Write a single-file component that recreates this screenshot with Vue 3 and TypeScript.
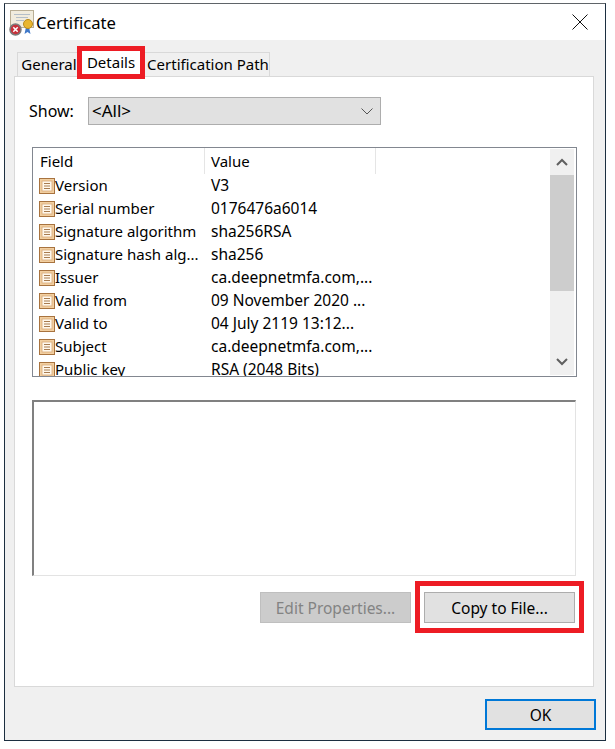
<script setup lang="ts">
interface Row { field: string; value: string }
const rows: Row[] = [
  { field: 'Version', value: 'V3' },
  { field: 'Serial number', value: '0176476a6014' },
  { field: 'Signature algorithm', value: 'sha256RSA' },
  { field: 'Signature hash alg...', value: 'sha256' },
  { field: 'Issuer', value: 'ca.deepnetmfa.com,...' },
  { field: 'Valid from', value: '09 November 2020 ...' },
  { field: 'Valid to', value: '04 July 2119 13:12...' },
  { field: 'Subject', value: 'ca.deepnetmfa.com,...' },
  { field: 'Public key', value: 'RSA (2048 Bits)' },
]
</script>

<template>
  <div class="window">
    <header class="titlebar">
      <svg class="cert" width="27" height="27" viewBox="0 0 27 27">
        <rect x="3.500" y="1.500" width="23" height="17" fill="#f1ecdd" stroke="#b9ae94" />
        <path d="M7 5.500h16M9 8.500h12M9 11.500h8" stroke="#b4bec8" stroke-width="1" />
        <path d="M19 18l-1.500 7 3-2 3 2-1.500-7z" fill="#3f78c8" />
        <circle cx="21" cy="15" r="4.500" fill="#e9b62f" stroke="#b98a1c" />
        <circle cx="8.500" cy="20.500" r="5.500" fill="#c8303a" stroke="#7b7b7b" stroke-width="1.500" />
        <path d="M6.300 18.300l4.400 4.400M10.700 18.300l-4.400 4.400" stroke="#fff" stroke-width="1.500" />
      </svg>
      <span class="title">Certificate</span>
      <svg class="close" width="16" height="16" viewBox="0 0 16 16">
        <path d="M.5.500l15 15M15.500.500l-15 15" stroke="#111" stroke-width="1" fill="none" />
      </svg>
    </header>

    <div class="content">
      <nav class="tabs">
        <div class="tab general">General</div>
        <div class="tab active">Details</div>
        <div class="tab path">Certification Path</div>
        <div class="mark mark-tab"></div>
      </nav>

      <section class="panel">
        <div class="show-row">
          <label class="show-label">Show:</label>
          <div class="select">
            <span class="select-text">&lt;All&gt;</span>
            <svg width="12" height="7" viewBox="0 0 12 7">
              <path d="M.5.500L6 6l5.500-5.500" stroke="#555" stroke-width="1" fill="none" />
            </svg>
          </div>
        </div>

        <div class="list">
          <div class="list-main">
            <div class="list-head">
              <div class="head-field">Field</div>
              <div class="head-value">Value</div>
            </div>
            <div v-for="row in rows" :key="row.field" class="row">
              <svg class="row-icon" width="16" height="16" viewBox="0 0 16 16">
                <rect x=".5" y=".5" width="15" height="15" fill="#f2cfa0" stroke="#a8733f" />
                <rect x="3" y="3" width="10" height="10" fill="#fff8ec" stroke="#d7a878" stroke-width=".8" />
                <path d="M5 5.500h6M5 8h6M5 10.500h6" stroke="#a87c50" stroke-width="1" />
              </svg>
              <span class="cell-field">{{ row.field }}</span>
              <span class="cell-value">{{ row.value }}</span>
            </div>
          </div>
          <div class="scrollbar">
            <div class="arrow">
              <svg width="12" height="8" viewBox="0 0 12 8">
                <path d="M1 7l5-5 5 5" stroke="#606060" stroke-width="2" fill="none" />
              </svg>
            </div>
            <div class="thumb"></div>
            <div class="track"></div>
            <div class="arrow">
              <svg width="12" height="8" viewBox="0 0 12 8">
                <path d="M1 1l5 5 5-5" stroke="#606060" stroke-width="2" fill="none" />
              </svg>
            </div>
          </div>
        </div>

        <div class="detail-box"></div>

        <div class="actions">
          <button class="btn disabled" type="button">Edit Properties...</button>
          <button class="btn copy" type="button">
            Copy to File...
            <span class="mark mark-copy"></span>
          </button>
        </div>
      </section>

      <footer class="footer">
        <button class="btn ok" type="button">OK</button>
      </footer>
    </div>
  </div>
</template>

<style>
html, body { margin: 0; background: #fff; }
</style>

<style scoped>
.window {
  box-sizing: border-box;
  width: 602px;
  height: 738px;
  margin: 3px 0 0 4px;
  border: 1px solid #5f6468;
  border-bottom-color: #1c2e40;
  border-left-color: #1c2e40;
  border-right-color: #1c2e40;
  background: #f0f0f0;
  display: flex;
  flex-direction: column;
  font-family: "Noto Sans", "Open Sans", sans-serif;
  font-size: 15px;
  color: #000;
}
.titlebar {
  height: 36px;
  flex: none;
  background: #fff;
  display: flex;
  align-items: center;
  position: relative;
}
.cert { margin: 0 2px 0 2px; flex: none; }
.title { font-size: 16.700px; line-height: 24px; margin-top: 1px; }
.close { position: absolute; right: 17px; top: 10px; }
.content {
  flex: 1;
  display: flex;
  flex-direction: column;
  padding: 0 11px 0 9px;
}
.tabs {
  position: relative;
  height: 36px;
  display: flex;
  align-items: flex-end;
  padding-left: 3px;
  flex: none;
  white-space: nowrap;
}
.tab {
  box-sizing: border-box;
  height: 24px;
  line-height: 22px;
  border: 1px solid #d9d9d9;
  border-bottom: none;
  background: #f0f0f0;
  text-align: center;
}
.general { width: 60px; border-right: none; padding-left: 3px; }
.active {
  width: 68px;
  height: 28px;
  line-height: 26px;
  background: #fff;
  border: none;
  position: relative;
  z-index: 1;
  margin-bottom: -1px;
}
.path { width: 125px; border-left: none; padding-left: 2px; }
.mark {
  position: absolute;
  box-sizing: border-box;
  border: 5px solid #ed1c24;
  pointer-events: none;
  z-index: 2;
}
.mark-tab { left: 63px; top: 6px; width: 68px; height: 33px; }
.panel {
  box-sizing: border-box;
  height: 611px;
  flex: none;
  background: #fff;
  border: 1px solid #d9d9d9;
  padding: 20px 16px 0 17px;
  display: flex;
  flex-direction: column;
}
.show-row {
  display: flex;
  align-items: center;
  height: 28px;
  flex: none;
}
.show-label { width: 59px; margin-left: -3px; flex: none; font-size: 16px; padding-bottom: 1px; }
.select {
  box-sizing: border-box;
  width: 293px;
  height: 28px;
  background: #e1e1e1;
  border: 1px solid #adadad;
  display: flex;
  align-items: center;
  justify-content: space-between;
  padding: 0 7px 0 3px;
  font-size: 17px;
}
.select-text { padding-bottom: 2px; }
.list {
  box-sizing: border-box;
  width: 545px;
  height: 230px;
  margin-top: 22px;
  border: 1px solid #828790;
  display: flex;
  flex: none;
  overflow: hidden;
  padding-right: 2px;
}
.list-main { flex: 1; overflow: hidden; height: 228px; }
.list-head {
  display: flex;
  height: 26px;
  line-height: 27px;
}
.head-field {
  box-sizing: border-box;
  width: 172px;
  padding-left: 7px;
  border-right: 1px solid #e5e5e5;
}
.head-value {
  box-sizing: border-box;
  width: 171px;
  padding-left: 6px;
  border-right: 1px solid #e5e5e5;
}
.row {
  display: flex;
  align-items: center;
  height: 23px;
  white-space: nowrap;
}
.row-icon { margin-left: 6px; flex: none; }
.cell-field { width: 156px; flex: none; padding-bottom: 1px; }
.cell-value { font-size: 15.500px; padding-bottom: 1px; }
.scrollbar {
  width: 24px;
  height: 226px;
  margin-top: 1px;
  background: #f0f0f0;
  display: flex;
  flex-direction: column;
  flex: none;
}
.arrow {
  height: 26px;
  flex: none;
  display: flex;
  align-items: center;
  justify-content: center;
}
.thumb { height: 116px; background: #cdcdcd; flex: none; }
.track { flex: 1; }
.detail-box {
  box-sizing: border-box;
  width: 544px;
  height: 176px;
  margin-top: 23px;
  border: 1px solid #e3e3e3;
  border-top: 2px solid #808080;
  border-left: 2px solid #808080;
  background: #fff;
  flex: none;
}
.actions {
  display: flex;
  justify-content: flex-end;
  gap: 13px;
  margin-top: 16px;
  padding-right: 2px;
  flex: none;
}
.btn {
  box-sizing: border-box;
  width: 151px;
  height: 31px;
  padding: 0;
  background: #e1e1e1;
  border: 1px solid #adadad;
  font: inherit;
  font-size: 15.500px;
  color: #000;
  position: relative;
}
.btn.disabled { background: #cccccc; border-color: #bfbfbf; color: #838383; }
.mark-copy { left: -10px; top: -12px; width: 169px; height: 52px; }
.footer {
  display: flex;
  justify-content: flex-end;
  padding-top: 12px;
  margin-right: -2px;
}
.ok {
  width: 111px;
  height: 31px;
  border: 2px solid #0078d7;
}
</style>
